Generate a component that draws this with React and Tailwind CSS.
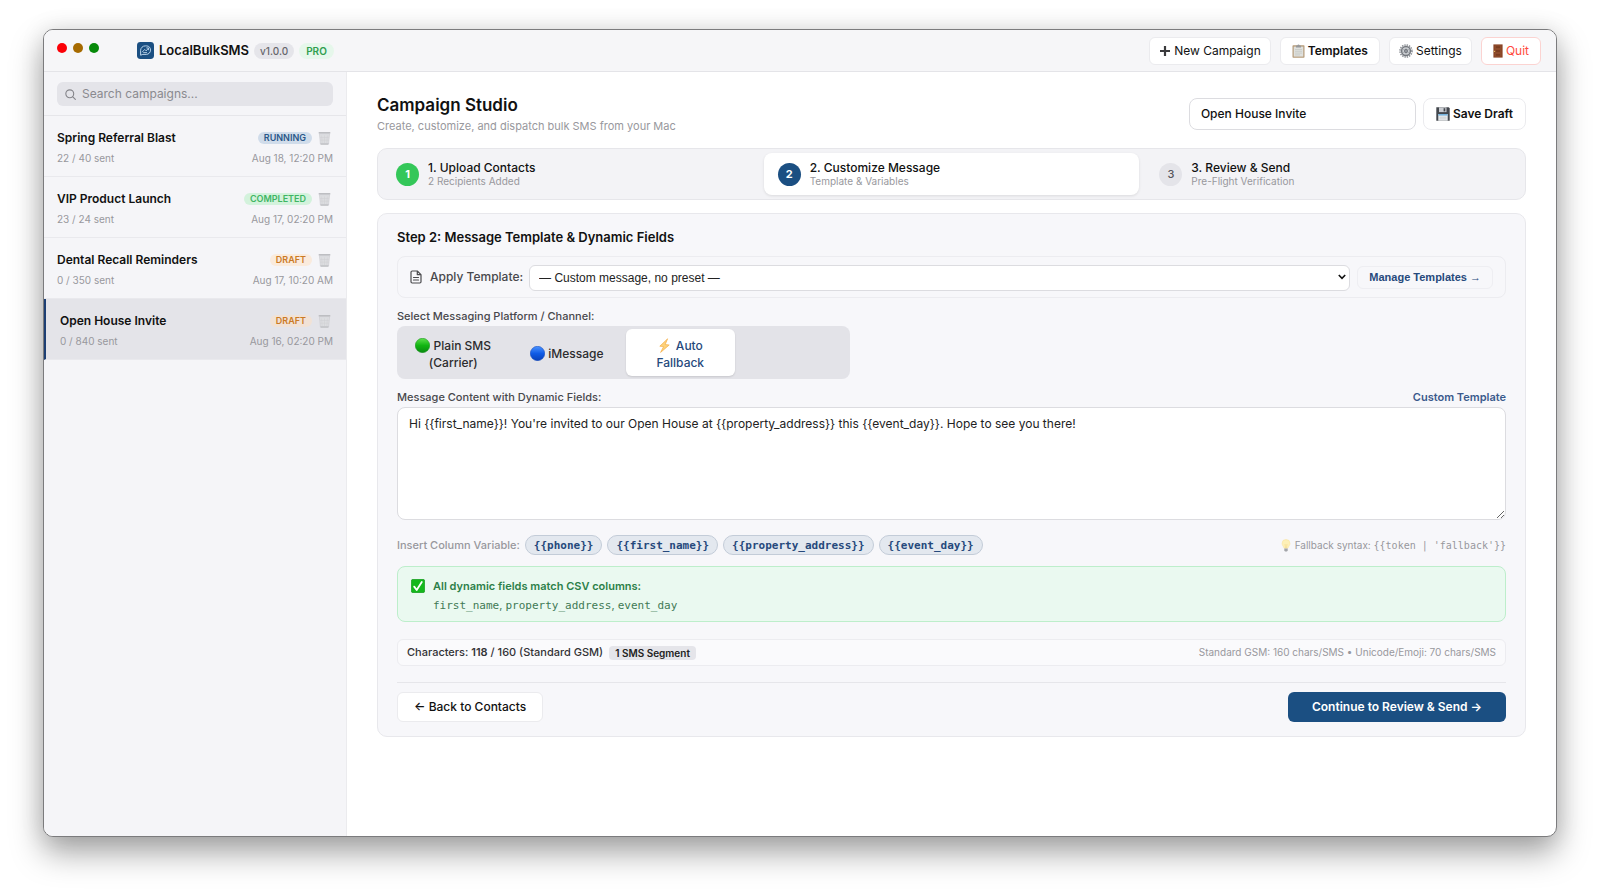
import React from 'react';

function Trash() {
  return (
    <svg viewBox="0 0 13 14" className="h-[14px] w-[13px]" aria-hidden="true">
      <path d="M1.4 2.6h10.2l-1 10.2q-.1.7-.8.7H3.2q-.7 0-.8-.7z" fill="#dcdde0" stroke="#c9cace" strokeWidth=".6" />
      <path d="M3.6 4.5l.6 7.5M6.5 4.5V12M9.4 4.5l-.6 7.5M2.2 6.5h8.6M2.5 9.2h8" stroke="#cecfd3" strokeWidth=".5" />
      <rect x=".6" y="1" width="11.8" height="1.6" rx=".6" fill="#bdbec2" />
      <path d="M2.6 12.9h7.8" stroke="#b1b2b6" strokeWidth=".8" />
    </svg>
  );
}

function Logo() {
  return (
    <svg viewBox="0 0 17 17" className="size-[17px]" aria-hidden="true">
      <rect width="17" height="17" rx="3.4" fill="#1b4f82" />
      <g fill="none" stroke="#b9d3ea" strokeLinecap="round" strokeLinejoin="round">
        <path d="M3.6 12.8V8.4a4.6 4.6 0 0 1 4.7-4.5h1.5a3.9 3.9 0 0 1 3.7 4.2 4.2 4.2 0 0 1-4.2 4.3H6.2z" strokeWidth="1" />
        <path d="M5.4 9.9l2.3-2.5 1.5 1.5 2.3-2.8M9.7 5.9l1.9.1-.1 1.8M6.6 10.6h3" strokeWidth=".9" />
      </g>
    </svg>
  );
}

function Plus() {
  return (
    <svg viewBox="0 0 12 12" className="size-3" aria-hidden="true">
      <path d="M6 1v10M1 6h10" stroke="#3a3a3c" strokeWidth="2.2" />
    </svg>
  );
}

function Clipboard() {
  return (
    <svg viewBox="0 0 13 14" className="h-[14px] w-[13px]" aria-hidden="true">
      <rect x=".5" y="1.2" width="12" height="12.5" rx=".8" fill="#b59a78" />
      <rect x="1.7" y="2.6" width="9.6" height="10" fill="#dfe0dd" />
      <path d="M3 5.5h7M3 7.3h7M3 9.1h7M3 10.9h5" stroke="#c3c5c2" strokeWidth=".7" />
      <path d="M4 3.5V2q0-.6.6-.6h.8q.1-1 1.1-1t1.1 1h.8q.6 0 .6.6v1.5z" fill="#97999b" />
    </svg>
  );
}

function Gear() {
  return (
    <svg viewBox="0 0 14 14" className="size-[14px]" aria-hidden="true">
      <circle cx="7" cy="7" r="6" fill="none" stroke="#8a8e94" strokeWidth="1.6" strokeDasharray="1.35 1" />
      <circle cx="7" cy="7" r="4.4" fill="#cfd2d6" stroke="#74787e" strokeWidth="1.5" />
      <path d="M7 3.4v7.2M3.8 5.2l6.4 3.6M10.2 5.2L3.8 8.8" stroke="#9ca0a5" strokeWidth=".7" />
      <circle cx="7" cy="7" r="1.9" fill="#6a6e75" />
      <circle cx="7" cy="7" r=".8" fill="#c5c8cc" />
    </svg>
  );
}

function Door() {
  return (
    <svg viewBox="0 0 10 14" className="h-[14px] w-[10px]" aria-hidden="true">
      <rect x=".4" y=".4" width="9.2" height="13.2" fill="#8a4526" />
      <path d="M2.4 1.8h5.2v2.8H2.4zM2.4 5.6h5.2v2.8H2.4zM2.4 9.4h5.2v2.8H2.4z" fill="#7a3c1f" stroke="#a2603c" strokeWidth=".4" />
      <circle cx="1.5" cy="7.4" r=".7" fill="#e2b85a" />
    </svg>
  );
}

function Floppy() {
  return (
    <svg viewBox="0 0 14 14" className="size-[14px]" aria-hidden="true">
      <path d="M.3.3h12.4l1 1v12.4H.3z" fill="#43474d" />
      <rect x="3" y=".3" width="7.5" height="4.8" fill="#c9ccd1" />
      <rect x="7.6" y="1.2" width="1.7" height="3.2" fill="#43474d" />
      <rect x="2.3" y="7" width="9.4" height="6.7" fill="#eceef0" />
      <rect x="2.3" y="7" width="9.4" height="1.6" fill="#76b3dd" />
      <path d="M3.5 10.2h7M3.5 11.9h7" stroke="#b5b8bc" strokeWidth=".6" />
    </svg>
  );
}

function Ball({ id, light, mid, dark }) {
  return (
    <svg viewBox="0 0 15 15" className="inline-block size-[15px] shrink-0 align-[-3px]" aria-hidden="true">
      <defs>
        <linearGradient id={id} x1="0" y1="0" x2="0" y2="1">
          <stop offset="0" stopColor={light} />
          <stop offset=".5" stopColor={mid} />
          <stop offset="1" stopColor={dark} />
        </linearGradient>
      </defs>
      <circle cx="7.5" cy="7.5" r="7.2" fill={`url(#${id})`} stroke={dark} strokeWidth=".5" />
    </svg>
  );
}

function Bolt() {
  return (
    <svg viewBox="0 0 13 15" className="mr-[2px] inline-block h-[15px] w-[13px] align-[-3px]" aria-hidden="true">
      <path d="M9.6.8L1.8 8.2l3.8.4-3 5.8 8.6-7.4-4-.5z" fill="#fdd27a" stroke="#f5ae45" strokeWidth=".7" strokeLinejoin="round" />
    </svg>
  );
}

function Bulb() {
  return (
    <svg viewBox="0 0 10 13" className="h-[13px] w-[10px]" aria-hidden="true">
      <path d="M5 .5a4 4 0 0 0-4 4c0 2 1.7 2.7 2.1 4.8h3.8C7.3 7.2 9 6.5 9 4.5a4 4 0 0 0-4-4z" fill="#fdf0b8" stroke="#f8e198" strokeWidth=".5" />
      <path d="M4 5l.5 4M6 5l-.5 4" stroke="#f3d27a" strokeWidth=".5" />
      <path d="M3.3 9.6h3.4v1.7L6 12.5H4l-.7-1.2z" fill="#a3a5a9" />
    </svg>
  );
}

function Check() {
  return (
    <svg viewBox="0 0 14 14" className="mt-px size-[14px]" aria-hidden="true">
      <rect x=".3" y=".3" width="13.4" height="13.4" rx="1.8" fill="#14b81c" stroke="#0b8f14" strokeWidth=".6" />
      <path d="M3.2 7.6l2.5 3.4 5.1-8.1" fill="none" stroke="#fff" strokeWidth="1.8" strokeLinecap="round" strokeLinejoin="round" />
    </svg>
  );
}

function Doc() {
  return (
    <svg viewBox="0 0 12 14" className="h-[14px] w-3" fill="none" stroke="#4a4a4d" strokeWidth="1.2" strokeLinejoin="round" strokeLinecap="round" aria-hidden="true">
      <path d="M7.3 1H2.2Q1 1 1 2.2v9.6Q1 13 2.2 13h7.6q1.2 0 1.2-1.2V4.7zM7.3 1v3.7H11M3.5 7.5h5M3.5 10h5" />
    </svg>
  );
}

const campaigns = [
  { name: 'Spring Referral Blast', sent: '22 / 40 sent', date: 'Aug 18, 12:20 PM', status: 'RUNNING', badge: 'bg-[#d0dcea] text-[#2a5788]' },
  { name: 'VIP Product Launch', sent: '23 / 24 sent', date: 'Aug 17, 02:20 PM', status: 'COMPLETED', badge: 'bg-[#d3f2dc] text-[#3fb563]' },
  { name: 'Dental Recall Reminders', sent: '0 / 350 sent', date: 'Aug 17, 10:20 AM', status: 'DRAFT', badge: 'bg-[#faebdd] text-[#cb7a25]' },
  { name: 'Open House Invite', sent: '0 / 840 sent', date: 'Aug 16, 02:20 PM', status: 'DRAFT', badge: 'bg-[#f1e2d6] text-[#cb7a25]', active: true },
];

const steps = [
  { n: 1, title: '1. Upload Contacts', sub: '2 Recipients Added', dot: 'bg-[#34c759] text-white font-bold' },
  { n: 2, title: '2. Customize Message', sub: 'Template & Variables', dot: 'bg-[#1b4f82] text-white font-bold', active: true },
  { n: 3, title: '3. Review & Send', sub: 'Pre-Flight Verification', dot: 'bg-[#e4e4e9] text-[#55555a] font-medium' },
];

const variables = ['{{phone}}', '{{first_name}}', '{{property_address}}', '{{event_day}}'];

const headerButton = 'flex h-7 items-center gap-[3px] rounded-md border bg-white text-[12px]';

function Header() {
  return (
    <header className="flex h-[42px] items-center justify-between border-b border-[#e4e4e8] bg-[#f6f6f8] pr-[15px] pl-[13px]">
      <div className="flex items-center">
        <div className="mb-[6px] flex gap-[6px]">
          <span className="size-[10px] rounded-full bg-[#fb0007]" />
          <span className="size-[10px] rounded-full bg-[#a66a00]" />
          <span className="size-[10px] rounded-full bg-[#078a0a]" />
        </div>
        <div className="ml-[38px] flex items-center gap-[5px]">
          <Logo />
          <h1 className="text-[13px] font-semibold text-[#111]">LocalBulkSMS</h1>
          <span className="rounded-full bg-[#e5e5ea] px-[6px] text-[10px] leading-4 font-medium text-[#66666b]">v1.0.0</span>
          <span className="rounded-full bg-[#e6f7eb] px-[7px] text-[10px] leading-4 font-semibold text-[#2f9e4f]">PRO</span>
        </div>
      </div>
      <nav className="flex gap-[9px]">
        <button type="button" className={`${headerButton} border-[#ebebee] px-[9px]`}><Plus />New Campaign</button>
        <button type="button" className={`${headerButton} border-[#ebebee] px-[11px] font-semibold`}><Clipboard />Templates</button>
        <button type="button" className={`${headerButton} border-[#ebebee] px-[9px]`}><Gear />Settings</button>
        <button type="button" className={`${headerButton} border-[#fbd3d1] px-[11px] text-[#ff4b40]`}><Door />Quit</button>
      </nav>
    </header>
  );
}

function Sidebar() {
  return (
    <aside className="w-[303px] shrink-0 border-r border-[#ebebee] bg-[#f5f5f8]">
      <div className="border-b border-[#e6e6ea] px-[13px] pt-[10px] pb-[9px]">
        <label className="flex h-6 items-center gap-[6px] rounded-md bg-[#e4e4e9] px-2">
          <svg viewBox="0 0 12 12" className="size-[11px]" fill="none" stroke="#85858a" strokeWidth="1.2" strokeLinecap="round" aria-hidden="true">
            <circle cx="5.2" cy="5.2" r="4.3" />
            <path d="M8.5 8.5l2.8 2.8" />
          </svg>
          <input type="search" aria-label="Search campaigns" placeholder="Search campaigns..." className="min-w-0 flex-1 bg-transparent text-[12px] outline-none placeholder:text-[#8a8a8f]" />
        </label>
      </div>
      <ul>
        {campaigns.map((c) => (
          <li key={c.name} className={`flex h-[61px] flex-col justify-center gap-[5px] border-b border-[#e9e9ed] pt-[2px] pr-[13px] ${c.active ? 'border-l-2 border-l-[#1d3f73] bg-[#e4e4e9] pl-[14px]' : 'pl-[13px]'}`}>
            <div className="flex items-center pr-[2px]">
              <h2 className="flex-1 text-[12px] leading-4 font-semibold text-[#111]">{c.name}</h2>
              <span className={`mr-[6px] rounded-full px-[6px] text-[9px] leading-3 font-semibold ${c.badge}`}>{c.status}</span>
              <button type="button" aria-label={`Delete ${c.name}`}><Trash /></button>
            </div>
            <div className="flex justify-between text-[10px] leading-[14px] text-[#98989d]">
              <span>{c.sent}</span>
              <span>{c.date}</span>
            </div>
          </li>
        ))}
      </ul>
    </aside>
  );
}

function Stepper() {
  return (
    <ol className="mt-[14px] grid grid-cols-3 gap-[6px] rounded-[10px] border border-[#e6e6ea] bg-[#f3f3f6] p-1">
      {steps.map((s) => (
        <li key={s.n}>
          <button type="button" className={`flex h-[42px] w-full items-center gap-[9px] rounded-lg px-[14px] text-left ${s.active ? 'bg-white shadow-[0_1px_3px_rgba(0,0,0,0.1)]' : ''}`}>
            <span className={`flex size-[23px] items-center justify-center rounded-full text-[11px] ${s.dot}`}>{s.n}</span>
            <span className="flex flex-col">
              <span className="text-[12px] leading-[14px] font-medium text-[#111]">{s.title}</span>
              <span className="text-[10px] leading-3 text-[#98989d]">{s.sub}</span>
            </span>
          </button>
        </li>
      ))}
    </ol>
  );
}

function MessagePanel() {
  return (
    <section className="mt-[13px] rounded-[10px] border border-[#e8e8ec] bg-[#f7f7fa] px-[19px] pt-[13px] pb-[14px]">
      <h3 className="text-[13px] leading-5 font-semibold text-[#111]">Step 2: Message Template &amp; Dynamic Fields</h3>

      <div className="mt-[9px] flex h-[42px] items-center rounded-lg border border-[#ececf0] px-3">
        <Doc />
        <label htmlFor="template" className="ml-2 text-[12px] font-medium text-[#48484c]">Apply Template:</label>
        <div className="relative ml-[6px] flex-1">
          <select id="template" className="h-[26px] w-full appearance-none rounded-md border border-[#dcdce0] bg-white px-[9px] font-['Liberation_Sans',sans-serif] text-[12px] text-[#222]">
            <option>— Custom message, no preset —</option>
          </select>
          <svg viewBox="0 0 8 6" className="pointer-events-none absolute top-[10px] right-1 h-[6px] w-2" fill="none" stroke="#111" strokeWidth="1.6" aria-hidden="true">
            <path d="M.8 1L4 4.4 7.2 1" />
          </svg>
        </div>
        <button type="button" className="ml-[7px] h-[23px] rounded-md border border-[#eeeef2] px-[11px] font-['Liberation_Sans',sans-serif] text-[11px] font-bold text-[#26497c]">Manage Templates →</button>
      </div>

      <fieldset>
        <legend className="pt-[10px] text-[11px] leading-4 font-medium text-[#48484c]">Select Messaging Platform / Channel:</legend>
        <div className="mt-[2px] grid max-w-[453px] grid-cols-4 gap-[5px] rounded-lg bg-[#e3e3e8] px-[2px] py-[3px] text-[12px] leading-[17px] font-medium text-[#2c2c2e]">
          <button type="button" className="h-[47px] px-2 pt-[2px]"><Ball id="green" light="#5fe04c" mid="#12b512" dark="#0a8a10" /> Plain SMS (Carrier)</button>
          <button type="button" className="h-[47px] pt-[2px] whitespace-nowrap"><Ball id="blue" light="#4d94ff" mid="#0f5be6" dark="#0840b8" /> iMessage</button>
          <button type="button" aria-pressed="true" className="h-[47px] rounded-md bg-white px-6 pt-[2px] text-[#26497c] shadow-[0_1px_2px_rgba(0,0,0,0.12)]"><Bolt /> Auto Fallback</button>
        </div>
      </fieldset>

      <div className="mt-[10px] flex justify-between text-[11px] leading-4">
        <label htmlFor="message" className="font-medium text-[#48484c]">Message Content with Dynamic Fields:</label>
        <span className="font-semibold text-[#3b5a8c]">Custom Template</span>
      </div>
      <textarea id="message" className="mt-[2px] block h-[113px] w-full resize-y rounded-lg border border-[#dcdce0] bg-white px-[11px] py-2 text-[12px] leading-4 text-[#222]" defaultValue={"Hi {{first_name}}! You're invited to our Open House at {{property_address}} this {{event_day}}. Hope to see you there!"} />

      <div className="mt-[15px] flex h-5 items-center gap-[5px]">
        <span className="text-[11px] font-medium text-[#98989d]">Insert Column Variable:</span>
        {variables.map((v) => (
          <button key={v} type="button" className="h-5 rounded-full border border-[#c3ccd8] bg-[#e3e8ef] px-2 font-['DejaVu_Sans_Mono',monospace] text-[11px] leading-[17px] font-bold text-[#26497c]">{v}</button>
        ))}
        <span className="ml-auto flex items-center gap-1 text-[#98989d]">
          <Bulb />
          <span className="text-[10px]">Fallback syntax: <code className="font-['DejaVu_Sans_Mono',monospace]">{"{{token | 'fallback'}}"}</code></span>
        </span>
      </div>

      <div className="mt-[11px] flex h-[56px] items-start gap-2 rounded-lg border border-[#bdeecb] bg-[#eaf9f0] px-[13px] pt-[11px]">
        <Check />
        <div>
          <p className="text-[11px] leading-4 font-semibold text-[#2d8049]">All dynamic fields match CSV columns:</p>
          <p className="mt-[3px] text-[11px] leading-4 text-[#3f7a55]">
            <code className="font-['DejaVu_Sans_Mono',monospace]">first_name</code>, <code className="font-['DejaVu_Sans_Mono',monospace]">property_address</code>, <code className="font-['DejaVu_Sans_Mono',monospace]">event_day</code>
          </p>
        </div>
      </div>

      <div className="mt-[17px] flex h-[27px] items-center rounded-md border border-[#ececf0] bg-[#fafafc] px-[9px]">
        <span className="text-[11px] font-medium text-[#333336]">Characters: <b className="font-semibold">118</b> / 160 (Standard GSM)</span>
        <span className="ml-[6px] rounded bg-[#e5e5ea] px-[6px] text-[10px] leading-[14px] font-semibold text-[#222]">1 SMS Segment</span>
        <span className="ml-auto text-[10px] text-[#98989d]">Standard GSM: 160 chars/SMS • Unicode/Emoji: 70 chars/SMS</span>
      </div>

      <div className="mt-4 flex justify-between border-t border-[#e6e6ea] pt-[9px]">
        <button type="button" className="h-[30px] rounded-md border border-[#ebebee] bg-white px-4 text-[12px] font-medium text-[#111]">← Back to Contacts</button>
        <button type="button" className="h-[30px] rounded-md bg-[#1b4f82] px-6 text-[12px] font-semibold text-white">Continue to Review &amp; Send →</button>
      </div>
    </section>
  );
}

export default function App() {
  return (
    <div className="flex min-h-screen flex-col bg-white px-[43px] pt-[29px] pb-[57px] font-[Inter,'Liberation_Sans',sans-serif] text-[#111]">
      <div className="flex flex-1 flex-col overflow-hidden rounded-[10px] border border-[#7b7b7d] bg-white shadow-[0_16px_32px_rgba(0,0,0,0.35),0_0_24px_rgba(0,0,0,0.1)]">
        <Header />
        <div className="flex flex-1">
          <Sidebar />
          <main className="min-w-0 flex-1 px-[30px] pt-[21px] pb-8">
            <div className="flex items-center justify-between">
              <div>
                <h2 className="text-[17px] leading-6 font-semibold">Campaign Studio</h2>
                <p className="mt-[2px] text-[11px] leading-[15px] text-[#98989d]">Create, customize, and dispatch bulk SMS from your Mac</p>
              </div>
              <div className="flex gap-[7px]">
                <input aria-label="Campaign name" defaultValue="Open House Invite" className="h-8 w-[227px] rounded-lg border border-[#dcdce0] bg-white px-[11px] text-[12px] font-medium outline-none" />
                <button type="button" className="flex h-8 items-center gap-[3px] rounded-lg border border-[#ebebee] bg-white px-3 text-[12px] font-semibold"><Floppy />Save Draft</button>
              </div>
            </div>
            <Stepper />
            <MessagePanel />
          </main>
        </div>
      </div>
    </div>
  );
}
